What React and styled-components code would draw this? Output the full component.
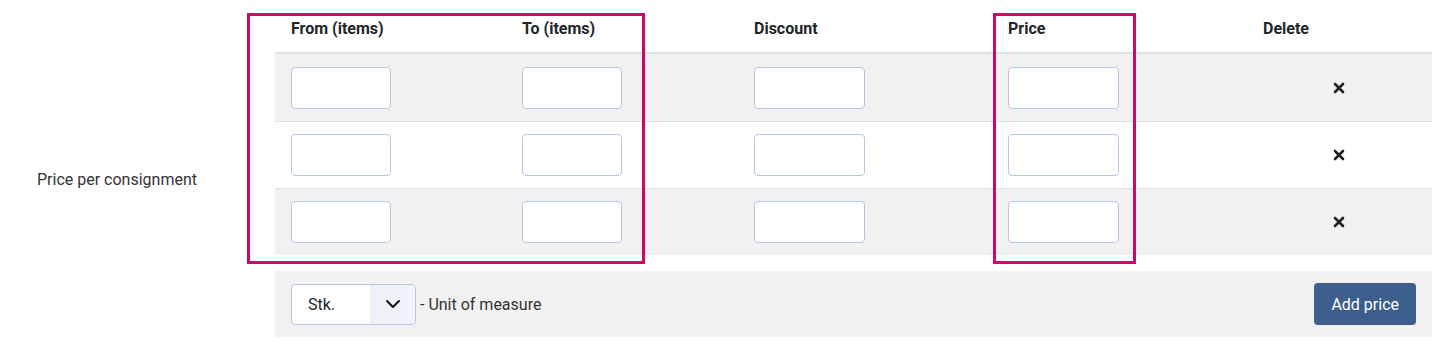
import React from "react";
import styled, { createGlobalStyle } from "styled-components";

const GlobalStyle = createGlobalStyle`
  body {
    margin: 0;
    background: #fff;
    font-family: Roboto, "Liberation Sans", sans-serif;
    color: #212529;
  }
`;

const columns = [
  { title: "From (items)", input: 100 },
  { title: "To (items)", input: 100 },
  { title: "Discount", input: 111 },
  { title: "Price", input: 111 },
];

const rows = [0, 1, 2];

function DeleteIcon() {
  return (
    <svg width="12" height="12" viewBox="0 0 12 12">
      <path
        d="M2 2 L10 10 M10 2 L2 10"
        stroke="#1e2126"
        strokeWidth="2.6"
        strokeLinecap="round"
      />
    </svg>
  );
}

function Chevron() {
  return (
    <svg width="16" height="10" viewBox="0 0 16 10">
      <path
        d="M2 2 L8 8 L14 2"
        fill="none"
        stroke="#111"
        strokeWidth="2"
        strokeLinecap="round"
        strokeLinejoin="round"
      />
    </svg>
  );
}

function App() {
  return (
    <>
      <GlobalStyle />
      <FormGroup>
        <Label>Price per consignment</Label>
        <Content>
          <TableWrap>
            <Highlight style={{ left: -28, width: 398 }} />
            <Highlight style={{ left: 718, width: 143 }} />
            <HeadRow>
              {columns.map((c) => (
                <HeadCell key={c.title}>{c.title}</HeadCell>
              ))}
              <HeadCell>Delete</HeadCell>
            </HeadRow>
            {rows.map((r) => (
              <Row key={r} striped={r % 2 === 0} first={r === 0}>
                {columns.map((c) => (
                  <Cell key={c.title}>
                    <Input width={c.input} />
                  </Cell>
                ))}
                <DeleteCell>
                  <DeleteIcon />
                </DeleteCell>
              </Row>
            ))}
          </TableWrap>
          <Footer>
            <UnitGroup>
              <Select>
                <SelectValue>Stk.</SelectValue>
                <SelectArrow>
                  <Chevron />
                </SelectArrow>
              </Select>
              <UnitText>- Unit of measure</UnitText>
            </UnitGroup>
            <AddButton>Add price</AddButton>
          </Footer>
        </Content>
      </FormGroup>
    </>
  );
}

const FormGroup = styled.div`
  display: flex;
  height: 358px;
`;

const Label = styled.div`
  width: 275px;
  flex-shrink: 0;
  box-sizing: border-box;
  padding-left: 37px;
  display: flex;
  align-items: center;
  font-size: 16px;
  color: #333;
`;

const Content = styled.div`
  width: 1157px;
`;

const TableWrap = styled.div`
  position: relative;
`;

const Highlight = styled.div`
  position: absolute;
  top: 13px;
  height: 251px;
  box-sizing: border-box;
  border: 3px solid #c90a68;
  pointer-events: none;
  z-index: 2;
`;

const gridCols = "231px 232px 254px 255px 185px";

const HeadRow = styled.div`
  display: grid;
  grid-template-columns: ${gridCols};
  height: 52px;
  border-bottom: 2px solid #dee2e6;
`;

const HeadCell = styled.div`
  padding: 20px 16px 0;
  font-size: 16px;
  font-weight: 700;
  line-height: 18px;
  color: #212529;
`;

const Row = styled.div`
  display: grid;
  grid-template-columns: ${gridCols};
  height: ${(p) => (p.first ? "67px" : "66px")};
  border-top: ${(p) => (p.first ? "none" : "1px solid #dee2e6")};
  background: ${(p) => (p.striped ? "#f1f1f1" : "#fff")};
`;

const Cell = styled.div`
  display: flex;
  align-items: center;
  padding: 0 16px;
`;

const DeleteCell = styled.div`
  display: flex;
  align-items: center;
  justify-content: center;
  padding-right: 2px;
`;

const Input = styled.div`
  width: ${(p) => p.width}px;
  height: 42px;
  box-sizing: border-box;
  background: #fff;
  border: 1px solid #b7c7e2;
  border-radius: 4px;
`;

const Footer = styled.div`
  margin-top: 16px;
  height: 66px;
  background: #f1f1f1;
  display: flex;
  align-items: center;
  justify-content: space-between;
  padding: 0 16px;
`;

const UnitGroup = styled.div`
  display: flex;
  align-items: center;
  gap: 4px;
`;

const Select = styled.div`
  display: flex;
  width: 125px;
  height: 41px;
  box-sizing: border-box;
  border: 1px solid #b7c7e2;
  border-radius: 4px;
  overflow: hidden;
  background: #fff;
`;

const SelectValue = styled.div`
  flex: 1;
  display: flex;
  align-items: center;
  padding-left: 16px;
  font-size: 16px;
  color: #212529;
`;

const SelectArrow = styled.div`
  width: 45px;
  background: #eef2f9;
  display: flex;
  align-items: center;
  justify-content: center;
`;

const UnitText = styled.span`
  font-size: 16px;
  color: #333;
`;

const AddButton = styled.button`
  height: 42px;
  padding: 0 17px;
  border: none;
  border-radius: 4px;
  background: #3b5e8c;
  color: #fff;
  font-family: Roboto, "Liberation Sans", sans-serif;
  font-size: 16px;
  cursor: pointer;
`;

export default App;
